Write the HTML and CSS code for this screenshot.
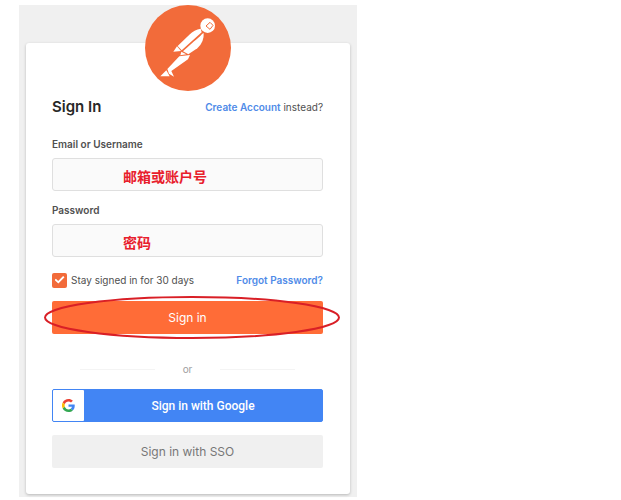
FILE: index.html
```html
<!DOCTYPE html>
<html lang="en">
<head>
<meta charset="utf-8">
<meta name="viewport" content="width=device-width, initial-scale=1">
<title>Sign In</title>
<link rel="stylesheet" href="styles.css">
</head>
<body>
<main class="panel">
  <form class="card">
    <svg class="logo" viewBox="45 15 258 258" aria-hidden="true">
      <circle cx="174" cy="144" r="129" fill="#f26b3a"/>
      <g fill="#fff">
        <circle cx="233" cy="77" r="22"/>
        <path d="M212 86 Q193 89 178 104 L143 138 L155 151 L215 97Z"/>
        <path d="M219 100 L159 154 L175 163 L202 145 Q223 126 221 100Z"/>
        <path d="M141 139 L153 153 L130 155Z"/>
        <path d="M154 155 L169 163 L151 166Z"/>
        <path d="M148 169 L180 165 L174 178 L124 213 L132 230 L117 221 L112 207Z"/>
        <path d="M109 211 L119 229 L91 229Z"/>
      </g>
      <g fill="none" stroke="#f26b3a" stroke-width="3">
        <path d="M228 78 L240 67 L249 76 L240 88Z"/>
        <path d="M212 105 L194 121"/>
      </g>
    </svg>

    <header class="heading">
      <h1>Sign In</h1>
      <p><a href="#">Create Account</a> instead?</p>
    </header>

    <div class="field">
      <label for="username">Email or Username</label>
      <input id="username" type="text" placeholder="邮箱或账户号">
    </div>
    <div class="field">
      <label for="password">Password</label>
      <input id="password" type="password" placeholder="密码">
    </div>

    <div class="options">
      <label class="remember"><input type="checkbox" checked>Stay signed in for 30 days</label>
      <a href="#">Forgot Password?</a>
    </div>

    <div class="submit">
      <button class="button primary" type="submit">Sign in</button>
      <svg class="ring" viewBox="0 0 296 43" preserveAspectRatio="none" aria-hidden="true">
        <ellipse cx="148" cy="21.5" rx="147" ry="20.5"/>
      </svg>
    </div>

    <div class="divider"><span>or</span></div>

    <button class="button google" type="button">
      <span class="google-mark">
        <svg viewBox="0 0 48 48" aria-hidden="true">
          <path fill="#ea4335" d="M24 9.5c3.5 0 6.700 1.200 9.200 3.600l6.900-6.900C35.900 2.400 30.500 0 24 0 14.600 0 6.500 5.400 2.600 13.200l8 6.200C12.400 13.700 17.700 9.500 24 9.500z"/>
          <path fill="#4285f4" d="M47 24.600c0-1.600-.2-3.100-.4-4.600H24v9h12.900c-.6 3-2.200 5.500-4.700 7.200l7.700 6C44.400 38 47 31.800 47 24.600z"/>
          <path fill="#fbbc05" d="M10.500 28.600A14.500 14.500 0 0 1 10.500 19.400l-8-6.200a24 24 0 0 0 0 21.600z"/>
          <path fill="#34a853" d="M24 48c6.500 0 11.900-2.100 15.900-5.800l-7.700-6c-2.200 1.500-4.900 2.300-8.200 2.300-6.300 0-11.600-4.200-13.500-9.900l-8 6.200C6.500 42.600 14.600 48 24 48z"/>
        </svg>
      </span>
      <span class="google-text">Sign in with Google</span>
    </button>
    <button class="button sso" type="button">Sign in with SSO</button>
  </form>
</main>
</body>
</html>
```
FILE: styles.css
```css
* {
  box-sizing: border-box;
}

body {
  margin: 0;
  padding: 5px 19px;
  background: #fff;
  color: #505050;
  font: 10px/16px Inter, "Noto Sans CJK SC", sans-serif;
}

a {
  color: #4f8be8;
  font-weight: 600;
  text-decoration: none;
}

.panel {
  max-width: 338px;
  padding: 38px 7px 3px;
  background: #f0f0f0;
}

.card {
  position: relative;
  display: flex;
  flex-direction: column;
  padding: 52px 27px 26px 26px;
  border-radius: 3px;
  background: #fff;
  box-shadow: 0 1px 3px rgba(0, 0, 0, 0.24);
}

.logo {
  position: absolute;
  top: -38px;
  left: 50%;
  width: 86px;
  margin-left: -43px;
}

.heading,
.options {
  display: flex;
  align-items: center;
  justify-content: space-between;
}

.heading {
  margin-bottom: 17px;
}

.heading h1 {
  margin: 0;
  color: #282828;
  font-size: 15px;
  font-weight: 600;
  line-height: 24px;
}

.heading p {
  margin: 0;
}

.field {
  display: flex;
  flex-direction: column;
  gap: 6px;
  margin-bottom: 11px;
}

.field label {
  font-weight: 600;
}

.field input {
  width: 100%;
  height: 33px;
  padding: 2px 8px 0 70px;
  border: 1px solid #dfdfdf;
  border-radius: 3px;
  background: #fafafa;
  color: #e8202c;
  font: bold 14px "Noto Sans CJK SC", sans-serif;
}

.field input::placeholder {
  color: #e8202c;
  opacity: 1;
}

.options {
  margin: 4px 0 13px;
}

.remember {
  display: flex;
  align-items: center;
  gap: 4px;
}

.remember input {
  display: grid;
  place-items: center;
  width: 15px;
  height: 15px;
  margin: 0;
  border-radius: 2px;
  background: #f26b3a;
  appearance: none;
}

.remember input:checked::before {
  width: 10px;
  height: 8px;
  background: #fff;
  clip-path: polygon(0 50%, 14% 34%, 37% 61%, 86% 0, 100% 15%, 39% 94%);
  content: "";
}

.button {
  width: 100%;
  height: 33px;
  padding: 0;
  border: 0;
  border-radius: 2px;
  font: 12px/16px Inter, sans-serif;
}

.submit {
  position: relative;
  display: flex;
}

.primary {
  background: #ff6c37;
  color: #fff;
}

.ring {
  position: absolute;
  top: -5px;
  left: -8px;
  width: calc(100% + 25px);
  height: 43px;
  fill: none;
  stroke: #d91f26;
  stroke-width: 2;
  pointer-events: none;
}

.divider {
  display: flex;
  align-items: center;
  gap: 28px;
  margin: 27px 28px 12px;
  color: #a0a0a0;
}

.divider::before,
.divider::after {
  flex: 1;
  height: 1px;
  background: #f4f4f4;
  content: "";
}

.google {
  display: flex;
  margin-bottom: 13px;
  border: 1px solid #4285f4;
  background: #4285f4;
  color: #fff;
  font-family: Roboto, sans-serif;
  font-weight: 500;
}

.google-mark {
  display: grid;
  place-items: center;
  align-self: stretch;
  width: 31px;
  border-radius: 1px;
  background: #fff;
}

.google-mark svg {
  width: 13px;
  height: 13px;
}

.google-text {
  flex: 1;
  align-self: center;
}

.sso {
  background: #f0f0f0;
  color: #777;
}
```
